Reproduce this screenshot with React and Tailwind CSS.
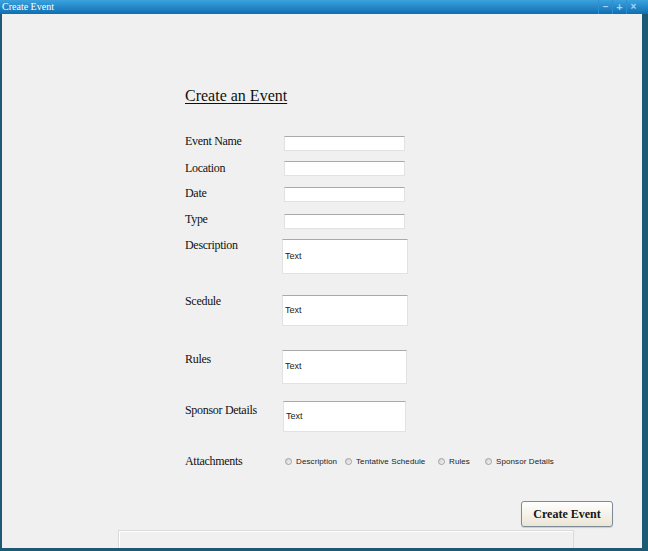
import React from "react";

const serif = { fontFamily: '"Liberation Serif", "Times New Roman", serif' };
const sans = { fontFamily: '"Liberation Sans", Arial, sans-serif' };

function Field({ label, mt, labelW = "w-[99px]", inputW = "w-[121px]", h = "h-[15px]", labelMt = "-mt-[2px]", area }) {
  return (
    <div className={`flex items-start ${mt}`}>
      <div className={`${labelW} ${labelMt} shrink-0 text-[12px] leading-[15px] tracking-[-0.3px] text-[#111]`} style={serif}>
        {label}
      </div>
      <div
        className={`${inputW} ${h} bg-white border border-[#e2e2e2] border-t-[#a9a9a9] flex items-center pl-[2px] text-[9px] text-[#222]`}
        style={sans}
      >
        {area ? "Text" : null}
      </div>
    </div>
  );
}

function Radio({ label, w }) {
  return (
    <div className={`flex items-center ${w}`}>
      <span className="w-[7px] h-[7px] rounded-full border border-[#a0a0a0] bg-gradient-to-br from-[#cfcfcf] to-[#f6f6f6] shrink-0" />
      <span className="ml-[4px] text-[8px] leading-[10px] tracking-[0.1px] text-[#222]" style={sans}>
        {label}
      </span>
    </div>
  );
}

export default function App() {
  return (
    <div className="w-[648px] h-[551px] flex flex-col bg-[#1d5874]">
      {/* title bar */}
      <div className="h-[14px] flex items-center justify-between bg-gradient-to-b from-[#3aa3de] to-[#0e6eb3] pl-[2px] pr-[8px]">
        <span className="text-[10px] leading-[12px] text-white" style={serif}>
          Create Event
        </span>
        <div className="flex h-full">
          <span className="w-[14px] h-full flex items-center justify-center text-[#a8d6f2] text-[10px] font-bold leading-none border-l border-[#2f8fcc]" style={sans}>–</span>
          <span className="w-[14px] h-full flex items-center justify-center text-[#a8d6f2] text-[11px] font-bold leading-none border-l border-[#2f8fcc]" style={sans}>+</span>
          <span className="w-[14px] h-full flex items-center justify-center text-[#a8d6f2] text-[10px] font-bold leading-none border-l border-[#2f8fcc]" style={sans}>×</span>
        </div>
      </div>

      {/* body */}
      <div className="flex-1 bg-[#f0f0f0] ml-[2px] mr-[6px] mb-[3px] flex flex-col">
        <div className="ml-[183px] flex flex-col">
          <div className="mt-[72px] text-[16px] leading-[20px] text-[#111] underline underline-offset-2" style={serif}>
            Create an Event
          </div>

          <Field label="Event Name" mt="mt-[30px]" />
          <Field label="Location" mt="mt-[10px]" labelMt="mt-[0px]" />
          <Field label="Date" mt="mt-[11px]" labelMt="-mt-[1px]" />
          <Field label="Type" mt="mt-[12px]" labelMt="-mt-[2px]" />

          <Field label="Description" mt="mt-[10px]" labelW="w-[97px]" inputW="w-[126px]" h="h-[35px]" labelMt="-mt-[1px]" area />
          <Field label="Scedule" mt="mt-[21px]" labelW="w-[97px]" inputW="w-[126px]" h="h-[31px]" labelMt="-mt-[1px]" area />
          <Field label="Rules" mt="mt-[24px]" labelW="w-[97px]" inputW="w-[125px]" h="h-[34px]" labelMt="mt-[2px]" area />
          <Field label="Sponsor Details" mt="mt-[17px]" labelW="w-[98px]" inputW="w-[123px]" h="h-[31px]" labelMt="mt-[2px]" area />

          <div className="flex items-center mt-[22px] h-[15px]">
            <div className="w-[100px] text-[12px] leading-[15px] tracking-[-0.3px] text-[#111]" style={serif}>
              Attachments
            </div>
            <Radio label="Description" w="w-[60px]" />
            <Radio label="Tentative Schedule" w="w-[93px]" />
            <Radio label="Rules" w="w-[47px]" />
            <Radio label="Sponsor Details" />
          </div>
        </div>

        <div className="flex justify-end pr-[29px] mt-[32px]">
          <button
            className="w-[92px] h-[26px] rounded-[3px] border border-[#7d8b98] bg-gradient-to-b from-[#ffffff] to-[#ebe5d4] shadow-[0_1px_1px_rgba(0,0,0,0.15)] text-[12px] font-bold text-[#151515]"
            style={serif}
          >
            Create Event
          </button>
        </div>

        <div className="mt-[3px] ml-[116px] w-[456px] flex-1 border-t border-l border-r border-[#dadada] shadow-[inset_1px_1px_0_#ffffff]" />
      </div>
    </div>
  );
}
